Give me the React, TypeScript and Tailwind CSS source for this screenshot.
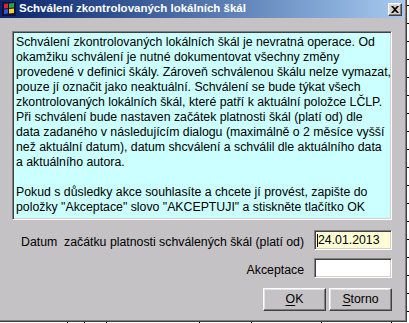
import React from "react";

const LINES = [
  "Schválení zkontrolovaných lokálních škál je nevratná operace. Od",
  "okamžiku schválení je nutné dokumentovat všechny změny",
  "provedené v definici škály. Zároveň schválenou škálu nelze vymazat,",
  "pouze jí označit jako neaktuální. Schválení se bude týkat všech",
  "zkontrolovaných lokálních škál, které patří k aktuální položce LČLP.",
  "Při schválení bude nastaven začátek platnosti škál (platí od) dle",
  "data zadaného v následujícím dialogu (maximálně o 2 měsíce vyšší",
  "než aktuální datum), datum shcválení a schválil dle aktuálního data",
  "a aktuálního autora.",
  "",
  "Pokud s důsledky akce souhlasíte a chcete jí provést, zapište do",
  "položky \"Akceptace\" slovo \"AKCEPTUJI\" a stiskněte tlačítko OK",
];

const COLS = [68, 17, 22, 93, 52, 70, 70];

function AppIcon() {
  return (
    <svg width="14" height="14" viewBox="0 0 14 14" className="shrink-0">
      <rect x="0" y="0" width="14" height="14" fill="#101040" />
      <path d="M2 2 L6 1.5 L6 6 L2 6.5 Z" fill="#e8202a" />
      <path d="M7 1.5 L12 1 L12 5.5 L7 6 Z" fill="#2aa53a" />
      <path d="M2 7.5 L6 7 L6 11.5 L2 12 Z" fill="#2a5ad8" />
      <path d="M7 7 L12 6.5 L12 11 L7 11.5 Z" fill="#f2d21c" />
    </svg>
  );
}

function BackgroundTable() {
  return (
    <div className="flex h-full w-full bg-white bg-[repeating-linear-gradient(to_bottom,#000_0,#000_1px,transparent_1px,transparent_18px)] bg-[position:0_5px]">
      {COLS.map((w, i) => (
        <div key={i} style={{ width: w }} className="h-full shrink-0 border-r border-black" />
      ))}
    </div>
  );
}

const sunken =
  "border border-t-[#808080] border-l-[#808080] border-r-white border-b-white shadow-[inset_1px_1px_0_#404040,inset_-1px_-1px_0_#d4d0c8]";
const raised =
  "border border-t-white border-l-white border-r-[#404040] border-b-[#404040] shadow-[inset_-1px_-1px_0_#808080,inset_1px_1px_0_#e4e2e4]";

export default function App() {
  return (
    <div className="relative w-[409px] h-[323px] overflow-hidden bg-white font-['Liberation_Sans',Arial,sans-serif] text-black">
      <BackgroundTable />

      {/* dialog window */}
      <div className="absolute left-0 top-0 w-[407px] h-[322px] flex flex-col bg-[#c5c2c5] pr-[3px] pb-[3px] shadow-[inset_-1px_-1px_0_#404040,inset_-2px_-2px_0_#808080]">
        {/* title bar */}
        <div className="h-[18px] flex items-center pl-[2px] pr-[2px] bg-gradient-to-r from-[#0a246a] to-[#a6caf0]">
          <AppIcon />
          <span className="ml-[3px] text-white font-bold text-[11.5px] leading-none whitespace-nowrap">
            Schválení zkontrolovaných lokálních škál
          </span>
          <button
            className={`ml-auto w-[14px] h-[13px] flex items-center justify-center bg-[#d4d0c8] ${raised}`}
          >
            <svg width="8" height="7" viewBox="0 0 8 7">
              <path d="M0 0 L2 0 L4 2 L6 0 L8 0 L5 3.5 L8 7 L6 7 L4 5 L2 7 L0 7 L3 3.5 Z" fill="#000" />
            </svg>
          </button>
        </div>

        {/* client area */}
        <div className="flex-1 flex flex-col px-[12px] pt-[13px] text-[12.3px]">
          <div className={`h-[189px] bg-[#ccffff] pl-[3px] pt-[3px] leading-[15px] ${sunken}`}>
            {LINES.map((l, i) => (
              <div key={i} className="h-[15px] whitespace-nowrap">
                {l}
              </div>
            ))}
          </div>

          <div className="mt-[10px] flex justify-end gap-[10px]">
            <span className="pt-[5px] leading-[14px] whitespace-pre">
              Datum  začátku platnosti schválených škál (platí od)
            </span>
            <div className={`w-[78px] h-[20px] bg-[#fffdd4] flex items-center pl-[2px] ${sunken}`}>
              <span className="w-px h-[13px] bg-black" />
              <span className="leading-none">24.01.2013</span>
            </div>
          </div>

          <div className="mt-[8px] flex justify-end gap-[10px]">
            <span className="pt-[5px] leading-[14px]">Akceptace</span>
            <div className={`w-[78px] h-[20px] bg-white ${sunken}`} />
          </div>

          <div className="mt-[10px] flex justify-end gap-[3px]">
            <button className={`w-[63px] h-[23px] bg-[#c5c2c5] text-[12.3px] ${raised}`}>
              <span className="underline underline-offset-2">O</span>K
            </button>
            <button className={`w-[63px] h-[23px] bg-[#c5c2c5] text-[12.3px] ${raised}`}>
              <span className="underline underline-offset-2">S</span>torno
            </button>
          </div>
        </div>
      </div>
    </div>
  );
}
